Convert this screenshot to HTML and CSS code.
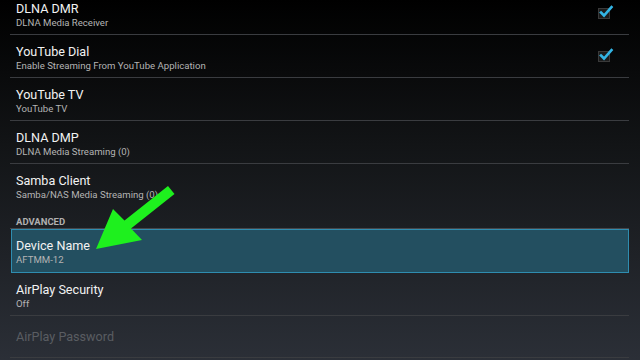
FILE: index.html
```html
<!DOCTYPE html>
<html lang="en">
<head>
    <meta charset="UTF-8">
    <title>Settings</title>
    <link rel="stylesheet" href="styles.css">
</head>
<body>
    <div class="list">
        <div class="pref">
            <div class="text">
                <p class="title">DLNA DMR</p>
                <p class="summary">DLNA Media Receiver</p>
            </div>
            <span class="check">
                <svg width="16" height="14" viewBox="0 0 16 14"><path d="M3 8.5 L6 11.5 L13.5 3" fill="none" stroke="#33b5e5" stroke-width="2.6" stroke-linecap="square"/></svg>
            </span>
        </div>
        <div class="pref">
            <div class="text">
                <p class="title">YouTube Dial</p>
                <p class="summary">Enable Streaming From YouTube Application</p>
            </div>
            <span class="check">
                <svg width="16" height="14" viewBox="0 0 16 14"><path d="M3 8.5 L6 11.5 L13.5 3" fill="none" stroke="#33b5e5" stroke-width="2.6" stroke-linecap="square"/></svg>
            </span>
        </div>
        <div class="pref">
            <div class="text">
                <p class="title">YouTube TV</p>
                <p class="summary">YouTube TV</p>
            </div>
        </div>
        <div class="pref">
            <div class="text">
                <p class="title">DLNA DMP</p>
                <p class="summary">DLNA Media Streaming (0)</p>
            </div>
        </div>
        <div class="pref last">
            <div class="text">
                <p class="title">Samba Client</p>
                <p class="summary">Samba/NAS Media Streaming (0)</p>
            </div>
        </div>

        <div class="category">ADVANCED</div>

        <div class="pref selected">
            <div class="text">
                <p class="title">Device Name</p>
                <p class="summary">AFTMM-12</p>
            </div>
        </div>
        <div class="pref">
            <div class="text">
                <p class="title">AirPlay Security</p>
                <p class="summary">Off</p>
            </div>
        </div>
        <div class="pref disabled">
            <div class="text">
                <p class="title">AirPlay Password</p>
            </div>
        </div>
    </div>

    <!-- annotation arrow -->
    <svg class="arrow" width="90" height="75" viewBox="90 180 90 75">
        <polygon points="168,186 174.5,194 131,228.5 142,240 96,249 113,209 124.5,220.5" fill="#1ef01e"/>
    </svg>
</body>
</html>
```

FILE: styles.css
```css
body {
    margin: 0;
    width: 640px;
    height: 360px;
    overflow: hidden;
    position: relative;
    font-family: Roboto, "Liberation Sans", sans-serif;
    background: linear-gradient(to bottom, #000 0%, #121416 40%, #2b2f37 100%);
    color: #f0f0f0;
}

.list {
    margin-top: -8px;
}

.pref {
    display: flex;
    align-items: flex-start;
    height: 42px;
    box-sizing: border-box;
    height: 43px;
    margin: 0 11px 0 10px;
    padding: 9px 19px 0 6px;
    border-bottom: 1px solid #3a3c40;
}

.pref.last {
    border-bottom: none;
}

.pref .text {
    flex: 1;
}

.pref p {
    margin: 0;
}

.title {
    font-size: 12.6px;
    line-height: 15px;
    color: #f2f2f2;
}

.summary {
    font-size: 9.6px;
    line-height: 13px;
    color: #b4b4b4;
}

.pref.disabled {
    height: 42px;
    padding-top: 13px;
}

.pref.disabled .title {
    color: #5a5d62;
}

.pref.selected {
    height: 44px;
    margin: 0 11px 0 11px;
    padding: 8px 19px 0 4px;
    border: 1px solid #2f8db0;
    background-color: #234f60;
}

.category {
    height: 22px;
    margin: 0 11px 0 10px;
    padding: 8.5px 0 0 6px;
    box-sizing: border-box;
    border-bottom: 1px solid #45474b;
    font-size: 9.5px;
    font-weight: bold;
    color: #b0b0b0;
    line-height: 12px;
}

.check {
    position: relative;
    align-self: center;
    margin-top: -9px;
    width: 10px;
    height: 9px;
    border: 1px solid #3a3a3a;
    background-color: #1c1c1c;
}

.check svg {
    position: absolute;
    left: -1px;
    top: -5px;
}

.arrow {
    position: absolute;
    left: 90px;
    top: 180px;
}
```
